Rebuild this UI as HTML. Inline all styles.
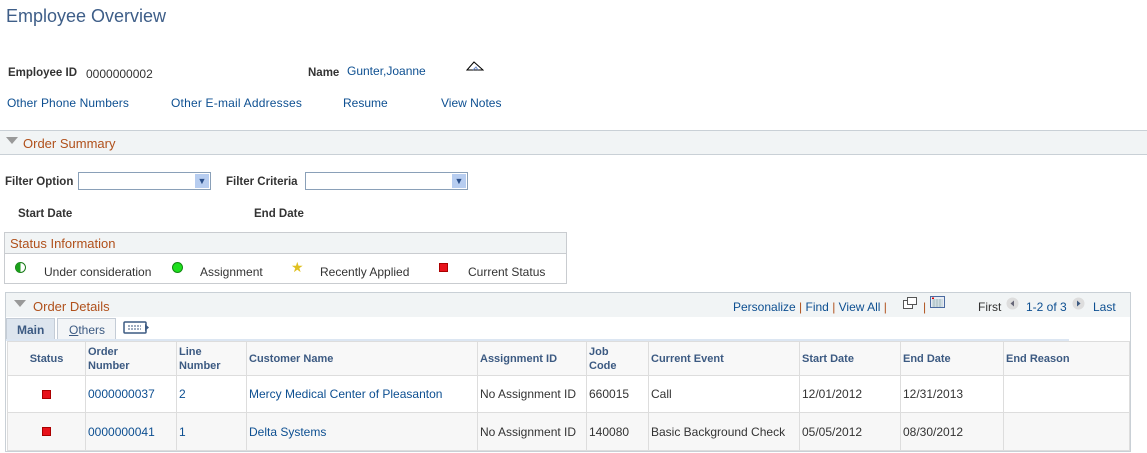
<!DOCTYPE html>
<html><head><style>
*{margin:0;padding:0;box-sizing:border-box}
body{width:1147px;height:453px;background:#fff;font-family:"Liberation Sans",Arial,sans-serif;font-size:12px;color:#333;position:relative;overflow:hidden}
.a{position:absolute;white-space:nowrap}
.lnk{color:#0d4f91}
.lbl{font-weight:bold;color:#333;font-size:11.5px}
.org{color:#b0501b;font-size:13px}
.th{font-weight:bold;color:#3c5a82;font-size:11px;line-height:14px}
.tri{width:0;height:0;border-left:6px solid transparent;border-right:6px solid transparent;border-top:7px solid #999}
.sq{width:9px;height:9px;background:#e8121b;border:1px solid #a00}
table{border-collapse:collapse;position:absolute;left:7px;top:341px}
td{border:1px solid #ddd;vertical-align:middle;padding:0 2px;font-size:12px}
</style></head><body>
<div class="a" style="left:6px;top:6px;font-size:18px;color:#3e5e88">Employee Overview</div>
<div class="a lbl" style="left:8px;top:67px">Employee ID</div>
<div class="a" style="left:86px;top:67px">0000000002</div>
<div class="a lbl" style="left:308px;top:67px">Name</div>
<div class="a lnk" style="left:347px;top:64px">Gunter,Joanne</div>
<svg class="a" style="left:466px;top:61px" width="18" height="11"><path d="M1 9 L8 1 L17 9 Z" fill="#fff" stroke="#000"/><path d="M7 9 L10 6 L12 9" stroke="#68c" fill="none"/></svg>
<div class="a lnk" style="left:7px;top:96px;letter-spacing:.1px">Other Phone Numbers</div>
<div class="a lnk" style="left:171px;top:96px;letter-spacing:.2px">Other E-mail Addresses</div>
<div class="a lnk" style="left:343px;top:96px">Resume</div>
<div class="a lnk" style="left:441px;top:96px">View Notes</div>

<div class="a" style="left:0;top:130px;width:1147px;height:25px;background:#f1f4f5;border-top:1px solid #c9d0d6;border-bottom:1px solid #c9d0d6"></div>
<div class="a tri" style="left:6px;top:137px"></div>
<div class="a org" style="left:23px;top:136px">Order Summary</div>

<div class="a lbl" style="left:5px;top:176px">Filter Option</div>
<div class="a" style="left:78px;top:172px;width:133px;height:18px;border:1px solid #8aa0b8"></div>
<div class="a" style="left:195px;top:174px;width:14px;height:14px;background:#b7cdf0;color:#2a4f8a;font-size:9px;text-align:center;line-height:14px">&#9660;</div>
<div class="a lbl" style="left:226px;top:176px">Filter Criteria</div>
<div class="a" style="left:305px;top:172px;width:163px;height:18px;border:1px solid #8aa0b8"></div>
<div class="a" style="left:452px;top:174px;width:14px;height:14px;background:#b7cdf0;color:#2a4f8a;font-size:9px;text-align:center;line-height:14px">&#9660;</div>
<div class="a lbl" style="left:18px;top:208px">Start Date</div>
<div class="a lbl" style="left:254px;top:208px">End Date</div>

<div class="a" style="left:4px;top:232px;width:563px;height:52px;border:1px solid #c9ccd0"></div>
<div class="a" style="left:5px;top:233px;width:561px;height:21px;background:#f1f4f5;border-bottom:1px solid #c9ccd0"></div>
<div class="a org" style="left:10px;top:236px">Status Information</div>
<svg class="a" style="left:15px;top:262px" width="11" height="11"><circle cx="5.5" cy="5.5" r="5" fill="#fff" stroke="#1a7a1a"/><path d="M5.5 .5 A5 5 0 0 0 5.5 10.5Z" fill="#1aa01a"/></svg>
<div class="a" style="left:44px;top:265px">Under consideration</div>
<svg class="a" style="left:172px;top:262px" width="11" height="11"><circle cx="5.5" cy="5.5" r="5" fill="#1ee01e" stroke="#118811"/></svg>
<div class="a" style="left:200px;top:265px">Assignment</div>
<div class="a" style="left:291px;top:259px;color:#e0c020;font-size:14px">&#9733;</div>
<div class="a" style="left:320px;top:265px">Recently Applied</div>
<div class="a sq" style="left:439px;top:263px"></div>
<div class="a" style="left:468px;top:265px">Current Status</div>

<div class="a" style="left:5px;top:292px;width:1126px;height:160px;border:1px solid #c9d0d6"></div>
<div class="a" style="left:6px;top:293px;width:1124px;height:24px;background:#f1f4f5"></div>
<div class="a tri" style="left:14px;top:300px"></div>
<div class="a org" style="left:33px;top:299px">Order Details</div>
<div class="a lnk" style="left:733px;top:300px">Personalize <span style="color:#b0501b">|</span> Find <span style="color:#b0501b">|</span> View All <span style="color:#b0501b">|</span></div>
<svg class="a" style="left:903px;top:297px" width="14" height="12"><rect x="0.5" y="3.5" width="9" height="8" fill="#fff" stroke="#555"/><rect x="4.5" y="0.5" width="9" height="7" fill="#fff" stroke="#555"/></svg>
<div class="a" style="left:923px;top:300px;color:#b0501b">|</div>
<svg class="a" style="left:930px;top:296px" width="15" height="12"><rect x="0.5" y="0.5" width="14" height="11" fill="#e8ecf4" stroke="#4a6aa0"/><path d="M2 4h11M2 6h11M2 8h11M2 10h11M4 3v8M7 3v8M10 3v8" stroke="#8aa" stroke-width=".6"/><rect x="2" y="1.5" width="2" height="1.5" fill="#d00"/></svg>
<div class="a" style="left:978px;top:300px">First</div>
<svg class="a" style="left:1006px;top:297px" width="13" height="13"><circle cx="6.5" cy="6.5" r="6" fill="#ddd"/><path d="M8 3.5 L4.5 6.5 L8 9.5Z" fill="#667"/></svg>
<div class="a" style="left:1026px;top:300px;color:#0d4f91">1-2 of 3</div>
<svg class="a" style="left:1072px;top:297px" width="13" height="13"><circle cx="6.5" cy="6.5" r="6" fill="#ddd"/><path d="M5 3.5 L8.5 6.5 L5 9.5Z" fill="#3c5a82"/></svg>
<div class="a lnk" style="left:1093px;top:300px">Last</div>

<div class="a" style="left:6px;top:318px;width:49px;height:22px;background:#dde5ee;border:1px solid #c4ccd6;font-weight:bold;color:#3c5a82;padding:4px 0 0 10px">Main</div>
<div class="a" style="left:57px;top:318px;width:59px;height:22px;background:#f3f5f7;border:1px solid #c4ccd6;color:#3c5a82;padding:4px 0 0 11px"><u>O</u>thers</div>
<svg class="a" style="left:123px;top:320px" width="27" height="16"><rect x="1" y="2" width="22" height="11" rx="1" fill="#fff" stroke="#3c5a82" stroke-width="1.5"/><path d="M5 6h13M5 9h13" stroke="#3c5a82" stroke-dasharray="2 1"/><path d="M22 4 L26 7.5 L22 11Z" fill="#3c5a82"/></svg>
<div class="a" style="left:6px;top:339px;width:1063px;height:2px;background:#dce6f2"></div>

<table>
<tr style="height:34px;background:#f8f8f8">
<td style="width:78px;text-align:center" class="th">Status</td>
<td style="width:91px" class="th">Order<br>Number</td>
<td style="width:70px" class="th">Line<br>Number</td>
<td style="width:231px" class="th">Customer Name</td>
<td style="width:109px" class="th">Assignment ID</td>
<td style="width:62px" class="th">Job<br>Code</td>
<td style="width:151px" class="th">Current Event</td>
<td style="width:101px" class="th">Start Date</td>
<td style="width:103px" class="th">End Date</td>
<td style="width:126px" class="th">End Reason</td>
</tr>
<tr style="height:37px;background:#fff">
<td><div class="sq" style="margin:0 auto"></div></td>
<td class="lnk">0000000037</td><td class="lnk">2</td><td class="lnk">Mercy Medical Center of Pleasanton</td>
<td>No Assignment ID</td><td>660015</td><td>Call</td><td>12/01/2012</td><td>12/31/2013</td><td></td>
</tr>
<tr style="height:38px;background:#f7f7f7">
<td><div class="sq" style="margin:0 auto"></div></td>
<td class="lnk">0000000041</td><td class="lnk">1</td><td class="lnk">Delta Systems</td>
<td>No Assignment ID</td><td>140080</td><td>Basic Background Check</td><td>05/05/2012</td><td>08/30/2012</td><td></td>
</tr>
</table>
</body></html>
